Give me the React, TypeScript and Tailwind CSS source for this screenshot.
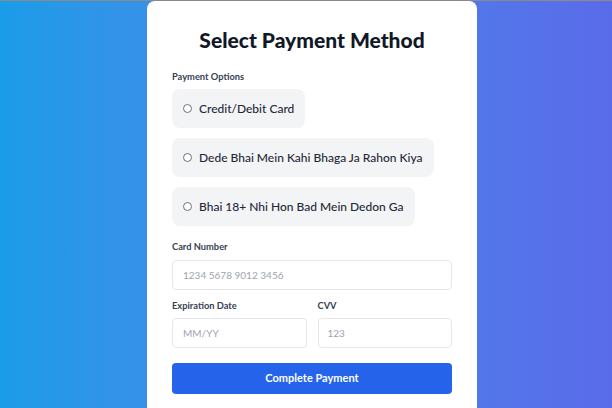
import React from "react";

const font = { fontFamily: 'Lato, "Noto Sans", sans-serif' };

function Option({ label }: { label: string }) {
  return (
    <div className="flex h-[39px] w-fit items-center gap-[7px] rounded-lg bg-[#f3f4f6] pl-[11px] pr-[11px]">
      <span className="h-[9px] w-[9px] shrink-0 rounded-full border border-[#6b7280] bg-white" />
      <span className="whitespace-nowrap text-[12px] font-medium text-[#1f2937]">{label}</span>
    </div>
  );
}

export default function App() {
  return (
    <div
      className="flex h-[408px] w-[612px] justify-start overflow-hidden border-t border-[#8a8a8a] bg-gradient-to-r from-[#1a9ce8] to-[#5a6bea]"
      style={font}
    >
      <div className="ml-[147px] h-[420px] w-[330px] shrink-0 rounded-lg bg-white px-[25px] pt-[24px]">
        <h1 className="text-center text-[21px] font-black leading-[30px] text-[#111827]">
          Select Payment Method
        </h1>
        <div className="mt-[15px] text-[9.3px] font-bold leading-[14px] text-[#374151]">
          Payment Options
        </div>
        <div className="mt-[5px] flex flex-col gap-[10px]">
          <Option label="Credit/Debit Card" />
          <Option label="Dede Bhai Mein Kahi Bhaga Ja Rahon Kiya" />
          <Option label="Bhai 18+ Nhi Hon Bad Mein Dedon Ga" />
        </div>
        <div className="mt-[14px] text-[9.3px] font-bold leading-[14px] text-[#374151]">
          Card Number
        </div>
        <div className="mt-[6px] flex h-[30px] items-center rounded border border-[#e5e7eb] px-[10px] text-[10px] text-[#9ca3af]">
          1234 5678 9012 3456
        </div>
        <div className="mt-[9px] flex gap-[11px]">
          <div className="flex-1">
            <div className="text-[9.3px] font-bold leading-[14px] text-[#374151]">Expiration Date</div>
            <div className="mt-[5px] flex h-[30px] items-center rounded border border-[#e5e7eb] px-[10px] text-[10px] text-[#9ca3af]">
              MM/YY
            </div>
          </div>
          <div className="flex-1">
            <div className="text-[9.3px] font-bold leading-[14px] text-[#374151]">CVV</div>
            <div className="mt-[5px] flex h-[30px] items-center rounded border border-[#e5e7eb] px-[9px] text-[10px] text-[#9ca3af]">
              123
            </div>
          </div>
        </div>
        <button className="mt-[15px] flex h-[31px] w-full items-center justify-center rounded bg-[#2563eb] text-[11px] font-bold text-white">
          Complete Payment
        </button>
      </div>
    </div>
  );
}
